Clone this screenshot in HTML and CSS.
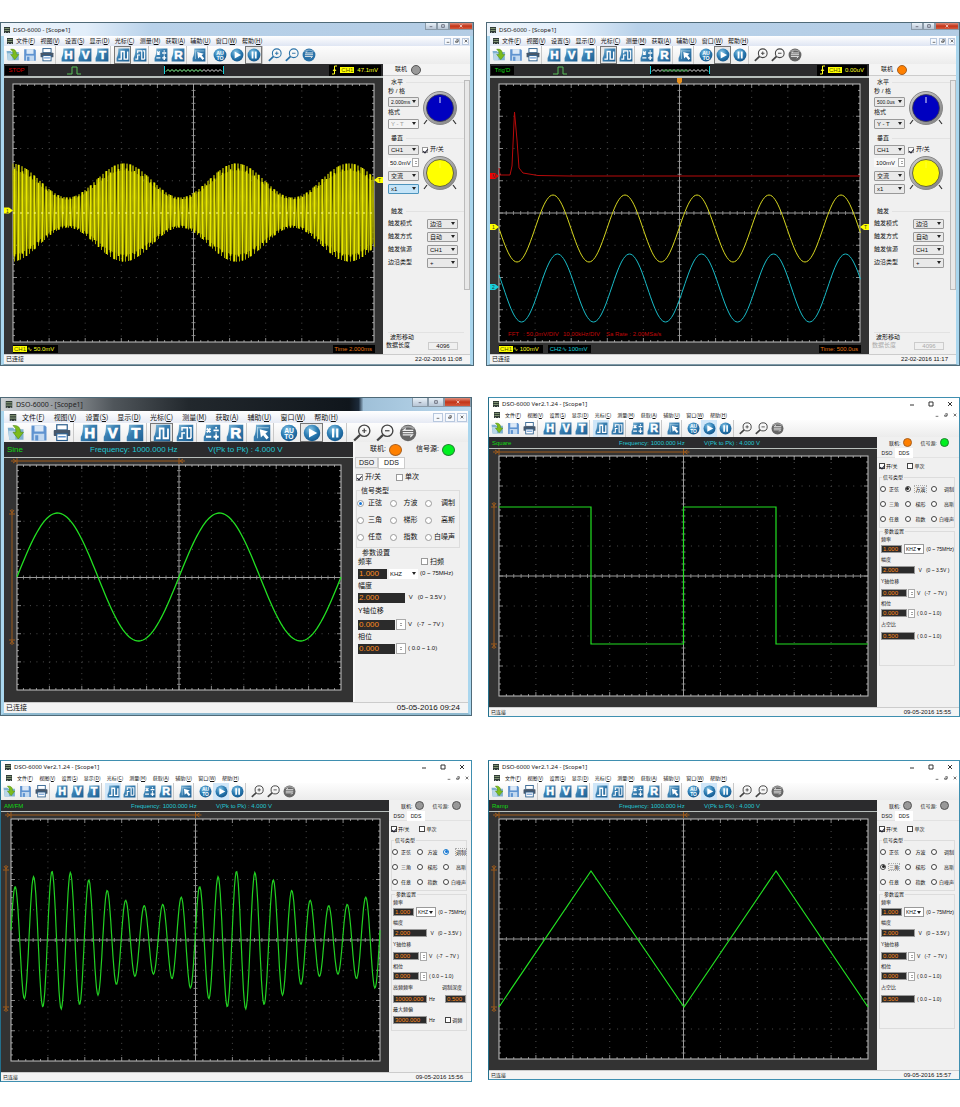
FILE: index.html
```
<!DOCTYPE html>
<html lang="zh-CN">
<head>
<meta charset="utf-8">
<meta name="viewport" content="width=device-width, initial-scale=1">
<title>DSO-6000</title>
<link rel="stylesheet" href="styles.css">
</head>
<body>
<svg class="sprite" aria-hidden="true">
  <defs>
    <linearGradient id="tile" x1="0" y1="0" x2="1" y2="1">
      <stop offset="0" stop-color="#8cc0dc"/><stop offset=".4" stop-color="#3a80b2"/><stop offset="1" stop-color="#1d5f93"/>
    </linearGradient>
    <radialGradient id="ball" cx=".4" cy=".3" r=".8">
      <stop offset="0" stop-color="#8ac6e6"/><stop offset=".5" stop-color="#2c7db4"/><stop offset="1" stop-color="#0f4f84"/>
    </radialGradient>
    <linearGradient id="metal" x1="0" y1="0" x2="1" y2="1">
      <stop offset="0" stop-color="#cfcfcf"/><stop offset="1" stop-color="#7e7e7e"/>
    </linearGradient>
    <symbol id="i-tile" viewBox="0 0 24 24"><path d="M4 1H23V23H1V17Q4 13 4 1Z" fill="url(#tile)"/></symbol>
    <symbol id="i-open" viewBox="0 0 24 24">
      <path d="M1 5H8L10 7H22V21H3Z" fill="#7fb0cf"/><path d="M2 9H11V21H3Z" fill="#b9d6e8"/>
      <path d="M8 2Q18 1 18 11H22L15 20L8 11H12Q13 6 8 2Z" fill="#7dbb1c" stroke="#4b8a12" stroke-width=".8"/>
    </symbol>
    <symbol id="i-save" viewBox="0 0 24 24">
      <path d="M2 2H20L22 4V22H2Z" fill="#5f93d0"/><rect x="6" y="2" width="12" height="8" fill="#dce9f7"/><rect x="5" y="13" width="14" height="9" fill="#c3d9f0"/><rect x="7" y="15" width="4" height="7" fill="#5f93d0"/>
    </symbol>
    <symbol id="i-print" viewBox="0 0 24 24">
      <rect x="5" y="1" width="14" height="7" fill="#fff" stroke="#2c5f8e" stroke-width="1.6"/>
      <rect x="1" y="8" width="22" height="8" rx="1" fill="#47576a"/><rect x="5" y="13" width="14" height="9" fill="#fff" stroke="#2c5f8e" stroke-width="1.6"/><path d="M7 17H17" stroke="#5f93d0" stroke-width="2"/>
    </symbol>
    <symbol id="i-H" viewBox="0 0 24 24"><use href="#i-tile"/><text class="glyph" x="13" y="19">H</text></symbol>
    <symbol id="i-V" viewBox="0 0 24 24"><use href="#i-tile"/><text class="glyph" x="13" y="19">V</text></symbol>
    <symbol id="i-T" viewBox="0 0 24 24"><use href="#i-tile"/><text class="glyph" x="13" y="19">T</text></symbol>
    <symbol id="i-R" viewBox="0 0 24 24"><use href="#i-tile"/><text class="glyph" x="13" y="19">R</text></symbol>
    <symbol id="i-pulse" viewBox="0 0 24 24"><use href="#i-tile"/><path d="M4 19H9V6H14V19H20V6" fill="none" stroke="#fff" stroke-width="2.4"/></symbol>
    <symbol id="i-pulses" viewBox="0 0 24 24"><use href="#i-tile"/><path d="M4 19H8V12H12M8 9V5H15V19H20M17 5H20V19" fill="none" stroke="#fff" stroke-width="2"/></symbol>
    <symbol id="i-math" viewBox="0 0 24 24"><use href="#i-tile"/><path d="M5 6L10 11M10 6L5 11M14 8.5H21M4 17H11M14 17H21M17.500 13.500V20.500" stroke="#fff" stroke-width="2.400"/><circle cx="17.500" cy="5" r="1.300" fill="#fff"/><circle cx="17.500" cy="12" r="1.100" fill="#fff"/></symbol>
    <symbol id="i-cursor" viewBox="0 0 24 24"><use href="#i-tile"/><path d="M6 4V19M6 5H21" stroke="#bfe0f0" stroke-width="1"/><path d="M9 7L20 10L16.500 12.500L21 18L18 20.500L13.500 15L10.500 18Z" fill="#fff"/></symbol>
    <symbol id="i-auto" viewBox="0 0 24 24"><circle cx="12" cy="12" r="11" fill="url(#ball)"/><text class="mini" x="12" y="11.500">AU</text><text class="mini" x="12" y="20">TO</text></symbol>
    <symbol id="i-play" viewBox="0 0 24 24"><circle cx="12" cy="12" r="11" fill="url(#ball)"/><path d="M8 6L19 12L8 18Z" fill="#fff"/></symbol>
    <symbol id="i-pause" viewBox="0 0 24 24"><circle cx="12" cy="12" r="11" fill="url(#ball)"/><path d="M9.500 6V18M15 6V18" stroke="#fff" stroke-width="3"/></symbol>
    <symbol id="i-zin" viewBox="0 0 24 24"><circle cx="15" cy="9" r="7.500" fill="none" stroke="currentColor" stroke-width="1.800"/><path d="M9.500 14.500L1.500 22" stroke="currentColor" stroke-width="3"/><path d="M12 9H18M15 6V12" stroke="currentColor" stroke-width="1.600"/></symbol>
    <symbol id="i-zout" viewBox="0 0 24 24"><circle cx="15" cy="9" r="7.500" fill="none" stroke="currentColor" stroke-width="1.800"/><path d="M9.500 14.500L1.500 22" stroke="currentColor" stroke-width="3"/><path d="M12 9H18" stroke="currentColor" stroke-width="1.600"/></symbol>
    <symbol id="i-swap" viewBox="0 0 24 24"><circle cx="12" cy="12" r="11" fill="currentColor"/><path d="M4 6Q12 1 20 6" stroke="#fff" stroke-opacity=".4" stroke-width="2" fill="none"/><path d="M19 8.500H6L9 6M5 14.500H18L15 17.500M5 11.500H19" stroke="#eee" stroke-width="1.500" fill="none"/></symbol>
    <symbol id="i-app" viewBox="0 0 12 12"><rect width="12" height="12" fill="#2f3b36"/><path d="M1 3H11M1 7H11" stroke="#9fb58a" stroke-width="1.500"/><path d="M3 12V10M9 12V10" stroke="#eee" stroke-width="1"/></symbol>
  </defs>
</svg>
<main class="gallery" id="gallery"></main>
<script src="app.js"></script>
</body>
</html>
```

FILE: styles.css
```
* { box-sizing: border-box; }
body { margin: 0; background: #fff; color: #111; font-family: "Liberation Sans", "Noto Sans CJK SC", sans-serif; }
.sprite { position: absolute; width: 0; height: 0; }
.glyph { font: 900 20px "Liberation Sans", sans-serif; fill: #fff; stroke: #fff; stroke-width: 1; text-anchor: middle; }
.mini { font: 700 9px "Liberation Sans", sans-serif; fill: #fff; text-anchor: middle; }
button, input, select { font: inherit; color: inherit; margin: 0; padding: 0; border: 0; background: none; border-radius: 0; }
fieldset { margin: 0; padding: 0; border: 0; min-width: 0; }

.gallery { padding: 22px 0 26px; }
.pair { display: grid; grid-template-columns: minmax(0, 1fr) minmax(0, 1fr); gap: 16px; align-items: start; margin-bottom: 43px; }
.pair.dso { gap: 12px; margin-bottom: 31px; }
.pair:last-child { margin-bottom: 0; }

/* window frames */
.win { --fs: 5px; --ui: 6px; --slot: 16px; --icon: 14px; --title: 12px; --menu: 10px; --tools: 17px; --info: 11px; --side: 82px; --status: 9px;
  font-size: var(--fs); line-height: 1.2; display: flex; flex-direction: column; border: 1px solid #3f8fb0; border-left-color: #24708c; background: #fff; white-space: nowrap; }
.win.scope7 { --fs: 6px; --slot: 17px; --icon: 15px; --title: 14px; --tools: 18px; --info: 12px; --side: 87px; --status: 10px;
  border: 0 solid #b9d9ee; border-width: 0 4px 2px; border-color: #b9d9ee #a9d6ee #7f9aa8; outline: 1px solid #4f6a78; outline-offset: -1px; }
.win.sine { --fs: 7px; --ui: 8px; --slot: 23px; --icon: 19px; --title: 14px; --menu: 12px; --tools: 19px; --info: 15px; --side: 115px; --status: 11px;
  border-width: 0 4px 3px; border-color: #b5d9ee #a9d6ee #8fb9cf; outline: 1px solid #4f6a78; outline-offset: -1px; }

.titlebar { height: var(--title); display: flex; align-items: center; gap: 3px; padding-left: 4px; font: var(--ui)/1 "Noto Sans", "Liberation Sans", sans-serif; color: #222; }
.scope7 .titlebar { margin: 0 -4px; padding-left: 4px; background: linear-gradient(90deg, #edf4fb 0, #e2eefa 18%, #b9d2ea 32%, #b3cce4 100%); border-top: 1px solid #34474f; }
.sine .titlebar { margin: 0 -4px; padding-left: 5px; font-size: 7px; background: linear-gradient(90deg, #cfd3d6 0, #8d9296 14%, #50565b 24%, #22282d 40%, #10161c 74%, #1c2a3a 76%, #9fc0d8 77%, #bcd9ee 100%); border-top: 1px solid #34474f; }
.appicon { width: 6px; height: 6px; }
.sine .appicon { width: 8px; height: 7px; }
.titlebar h2 { margin: 0 auto 0 0; font: inherit; }
.caption { display: flex; align-self: stretch; align-items: center; }
.caption button { width: 19px; height: 8px; display: grid; place-items: center; color: #333; }
.caption svg { width: 6px; height: 6px; fill: none; stroke: currentColor; }
.scope7 .caption, .sine .caption { align-items: flex-start; }
.scope7 .caption button, .sine .caption button { width: 12px; height: 7px; border: 1px solid #8a9aa8; border-top: 0; background: linear-gradient(#e9f1f8, #b8c6d6); color: #445; }
.scope7 .caption button:last-child, .sine .caption button:last-child { width: 24px; margin-right: 1px; background: linear-gradient(#e0907e, #c33518 50%, #d2583c); color: #fff; }
.sine .caption button { width: 16px; height: 9px; }
.sine .caption button:last-child { width: 27px; }
.scope7 .caption svg, .sine .caption svg { width: 4px; height: 4px; }

.menubar { height: var(--menu); display: flex; align-items: center; gap: 6px; padding-left: 5px; background: #fff; font-family: "Noto Sans CJK SC", sans-serif; }
.menubar .appicon { margin-right: -1px; }
.scope7 .menubar { gap: 5px; padding-left: 3px; background: linear-gradient(#fff, #dfe6f3); }
.scope7 .menubar .appicon { margin-right: -2px; }
.sine .menubar { gap: 9px; padding-left: 5px; background: linear-gradient(#fff, #e6eaf4); }
.sine .menubar .appicon { margin-right: -4px; }
.menubar a { color: inherit; text-decoration: none; }
.mdi { margin-left: auto; display: flex; gap: 2px; padding-right: 1px; }
.mdi button { width: 7px; height: 7px; display: grid; place-items: center; color: #333; }
.mdi svg { width: 4px; height: 4px; fill: none; stroke: currentColor; }
.scope7 .mdi button, .sine .mdi button { border: 1px solid #b8c8de; background: #f6f9fd; }
.sine .mdi button { width: 10px; height: 9px; }

.toolbar { height: var(--tools); display: flex; align-items: center; gap: 3px; background: linear-gradient(#fdfdfd, #ececec); color: #444; }
.toolgroup { height: var(--tools); display: flex; align-items: center; border-right: 1px solid #c8c8c8; }
.toolgroup:last-child { border: 0; }
.toolgroup button { width: var(--slot); height: var(--tools); display: flex; align-items: center; justify-content: center; flex: none; }
.toolgroup svg { width: calc(var(--icon) - 1px); height: calc(var(--icon) - 1px); flex: none; }
.toolgroup button.on { background: #cfe6f8; }
.scope7 .toolgroup button.on, .sine .toolgroup button.on { background: #e8e8e8; box-shadow: inset 0 0 0 1px #777; }
.toolbar.blue { color: #2a72a8; }
.toolbar .gray { color: #666; }

/* body: display and side panel */
.content { display: flex; align-items: stretch; }
.display { flex: 1; min-width: 0; background: #333; display: flex; flex-direction: column; }
.info { height: var(--info); display: flex; align-items: center; padding-left: 3px; font-size: var(--ui); line-height: 1; color: #22c8d4; background: #2b2b2d; }
.info .wave { width: 127px; color: #12d812; }
.info .freq { width: 85px; }
.sine .info .wave { width: 83px; }
.sine .info .freq { width: 118px; }
.rule { height: 1px; background: #b9c0bd; }
.scope7 .rule { height: 2px; }
.plot { display: block; width: 100%; height: auto; }
.plot text { font-family: "Liberation Sans", sans-serif; }
.scope7 .info { padding: 0 2px 0 1px; }
.state { width: 23px; height: 9px; line-height: 9px; background: #000; color: #d80000; text-align: center; }
.state.ok { color: #12d812; }
.info svg { display: block; height: 10px; }
.pulse { width: 16px; margin-left: 38px; }
.preview { width: 60px; margin-left: 82px; }
.trig { margin-left: auto; height: 11px; display: flex; align-items: center; gap: 3px; padding: 0 3px; background: #000; color: #ffff20; }
.trig svg { width: 5px; }
.badge { background: #ffff00; color: #555500; padding: 0 1px; }
.channels { height: 10px; display: flex; align-items: center; gap: 5px; padding: 0 8px 1px 9px; line-height: 8px; }
.channels span { background: #000; color: #ffff20; padding-right: 4px; }
.channels .two { color: #19d0dc; padding-left: 2px; }
.channels .time { margin-left: auto; color: #e07414; padding: 0 3px 0 1px; }
.channels b { font-weight: 400; background: #ffff00; color: #555500; padding: 0 1px; }

.side { width: var(--side); flex: none; background: #f0f0f0; display: flex; flex-direction: column; }
.links { height: var(--info); display: flex; align-items: center; gap: 3px; padding-left: 12px; }
.links .lamp + span { margin-left: 5px; }
.lamp { width: 9px; height: 9px; border-radius: 50%; border: 1px solid #555; background: #999; }
.lamp.orange { background: #ff8000; border-color: #a86020; }
.lamp.green { background: #00f020; border-color: #208030; }
.scope7 .links { border-bottom: 1px solid #ccc; background: #f4f4f4; gap: 4px; }
.scope7 .lamp { width: 10px; height: 10px; }
.sine .links { padding-left: 15px; }
.sine .lamp { width: 13px; height: 12px; }
.sine .links .lamp + span { margin-left: 11px; }

/* function generator panel */
.tabs { height: 10px; display: flex; align-items: stretch; padding-left: 2px; border-bottom: 1px solid #e2e2e2; }
.tabs button { width: 16px; line-height: 8px; }
.tabs button.sel { width: 18px; background: #fff; margin-bottom: -1px; }
.switches { height: 16px; display: flex; align-items: center; gap: 10px; padding-left: 2px; }
.switches label, .sweep { display: flex; align-items: center; gap: 1px; }
input[type=checkbox], input[type=radio] { appearance: none; width: 6px; height: 6px; border: 1px solid #444; background: #fff; flex: none; display: grid; place-items: center; }
input[type=radio] { border-radius: 50%; }
input[type=radio]:checked::before { content: ""; width: 3px; height: 3px; border-radius: 50%; background: #222; }
input[type=radio].blue { border-color: #1878c8; }
input[type=radio].blue:checked::before { background: #1878d8; }
input[type=checkbox]:checked::before { content: ""; width: 2px; height: 4px; border: solid #223; border-width: 0 1px 1px 0; transform: rotate(40deg); }
.group { margin: 0 4px 0 2px; border: 1px solid #dcdcdc; }
.group legend { padding: 0 1px; margin-left: 2px; line-height: 7px; }
.types { display: grid; grid-template-columns: 19px 21px 23px; justify-content: space-between; padding-bottom: 1px; }
.types label { height: 15px; display: flex; align-items: center; justify-content: space-between; }
.types label.focus span { outline: 1px dotted #aaa; }
.params { padding: 0 0 4px 1px; }
.params.tail { padding-bottom: 23px; }
.lab { height: 9px; line-height: 9px; display: flex; justify-content: space-between; padding-right: 4px; }
.lab.short { height: 8px; line-height: 8px; }
.lab.tall { height: 11px; line-height: 11px; }
.row { height: 12px; display: flex; align-items: center; gap: 2px; }
.row .unit { font-size: 5px; }
.row .gap { width: 5px; margin-left: 1px; }
.lcd { width: 34px; height: 8px; background: #2b2b2b; color: #ff8c1c; border: 1px solid #999; font-family: "Liberation Sans", sans-serif; font-size: 6px; line-height: 6px; padding-left: 1px; }
.lcd.s { width: 21px; }
.lcd.m { width: 26px; }
.spin { width: 7px; height: 9px; margin-left: -1px; border: 1px solid #aaa; background: #fff; display: flex; flex-direction: column; align-items: center; justify-content: space-evenly; }
.spin::before, .spin::after { content: ""; border: 1px solid transparent; border-bottom-color: #444; }
.spin::after { border-color: #444 transparent transparent; }
select { appearance: none; height: 10px; border: 1px solid #999; padding-left: 1px; line-height: 8px;
  background: #fff url("data:image/svg+xml,%3Csvg xmlns='http://www.w3.org/2000/svg' width='4' height='3'%3E%3Cpath d='M0 0H4L2 3Z' fill='%23222'/%3E%3C/svg%3E") no-repeat right 2px center; }
.row select { width: 22px; }

.sine .side { border-left: 2px solid #f8f8f8; }
.sine .tabs { height: 12px; padding-left: 0; }
.sine .tabs button { width: 23px; line-height: 10px; border: 1px solid #ccc; }
.sine .tabs button.sel { width: 27px; }
.sine .switches { height: 17px; gap: 15px; padding-left: 1px; }
.sine .switches label, .sine .sweep { gap: 2px; }
.sine input[type=checkbox], .sine input[type=radio] { width: 7px; height: 7px; border-color: #999; }
.sine .group { margin: 0 8px 0 1px; }
.sine .group legend { line-height: 9px; margin-left: 3px; }
.sine .types { grid-template-columns: 25px 28px 30px; padding-right: 4px; }
.sine .types label { height: 17px; }
.sine .params { padding: 0 0 44px 2px; border: 0; }
.sine .lab, .sine .lab.short { height: 9px; line-height: 9px; padding-right: 16px; }
.sine .lab.tall { height: 12px; line-height: 12px; }
.sine .row { height: 15px; }
.sine .row .unit { font-size: 6px; }
.sine .lcd { width: 47px; height: 10px; border: 0; font-size: 8px; line-height: 10px; }
.sine .lcd.s { width: 29px; }
.sine .lcd.m { width: 37px; }
.sine .spin { width: 10px; height: 11px; }
.sine .row select { width: 29px; border: 0; font-size: 6px; }

/* oscilloscope panel */
.pane { flex: 1; display: flex; }
.controls { flex: 1; min-width: 0; display: flex; flex-direction: column; padding: 1px 0 4px 5px; }
.scroll { width: 6px; height: 210px; margin-top: 4px; border: 1px solid #bbb; background: #e8e8e8; }
.head { height: 10px; line-height: 10px; padding: 0 0 0 3px; display: flex; align-items: center; gap: 3px; }
.head::after { content: ""; flex: 1; height: 1px; background: #e2e2e2; }
.vert { margin-top: 3px; }
.trigger { margin-top: 11px; }
.duo { display: flex; gap: 3px; }
.duo > div { width: 31px; }
.duo > .dial { width: 38px; }
.cell { height: 13px; display: flex; align-items: center; justify-content: space-between; }
.controls select { width: 31px; padding-left: 2px; border-radius: 1px; background-color: #e9e9e9; }
.controls select.sec { font-size: 5px; }
.controls select:disabled { opacity: 1; color: #999; background-color: #f4f4f4; }
.controls select.hot { background-color: #c4e4f8; border-color: #4d94bd; }
.controls .volts { width: 24px; height: 9px; padding-left: 2px; background: #f8f8f8; }
.horiz .lab { padding: 0; }
.knob { display: block; width: 36px; height: 36px; }
.horiz .dial { padding-top: 4px; }
.onoff { height: 13px; display: flex; align-items: center; gap: 2px; }
.onoff input { border-color: #999; }
.trigger .head { margin-bottom: 1px; }
.trigger .cell { padding-right: 6px; }
.memory { margin-top: auto; border-top: 1px solid #e2e2e2; padding-right: 6px; }
.memory .lab { padding-left: 2px; }
.memory .cell { height: 9px; margin-left: -2px; }
.memory .off { color: #aaa; }
.memory input { width: 30px; height: 8px; border: 1px solid #ccc; text-align: center; }

.status { height: var(--status); line-height: calc(var(--status) - 1px); display: flex; justify-content: space-between; padding: 0 8px 0 2px; background: #f4f4f4; border-top: 1px solid #ccc; }
.status time { font-size: var(--ui); }
.sine .status time { font-size: 8px; }
```

FILE: app.js
```
const NS = 'fill="none" stroke-width="1"';
const range = n => Array.from({ length: n }, (_, i) => i);
const icon = (id, cls = '') => `<svg class="${cls}" viewBox="0 0 24 24" aria-hidden="true"><use href="#i-${id}"/></svg>`;
let uid = 0;

const trace = (x0, x1, step, f) =>
  'M' + range(Math.round((x1 - x0) / step) + 1).map(i => {
    const x = x0 + i * step;
    return x.toFixed(1) + ' ' + f(x, i).toFixed(1);
  }).join('L');

/* graticule: 10 x 8 divisions, five ticks each */
function grid({ x, y, w, h }) {
  const cx = x + w / 2, cy = y + h / 2, dx = w / 10, dy = h / 8;
  let dots = '', ticks = '', axis = '';
  for (let i = 1; i < 10; i++) if (i !== 5) dots += `<path d="M${x + i * dx} ${y}V${y + h}" stroke-dasharray="1 ${dy / 5 - 1}"/>`;
  for (let i = 1; i < 8; i++) if (i !== 4) dots += `<path d="M${x} ${y + i * dy}H${x + w}" stroke-dasharray="1 ${dx / 5 - 1}"/>`;
  for (let i = 1; i < 50; i++) {
    const t = x + i * w / 50;
    ticks += `M${t} ${y}v${i % 5 ? 2 : 4}M${t} ${y + h}v-${i % 5 ? 2 : 4}`;
    axis += `M${t} ${cy - 2}v4`;
  }
  for (let i = 1; i < 40; i++) {
    const t = y + i * h / 40;
    ticks += `M${x} ${t}h${i % 5 ? 2 : 4}M${x + w} ${t}h-${i % 5 ? 2 : 4}`;
    axis += `M${cx - 2} ${t}h4`;
  }
  return `<rect x="${x}" y="${y}" width="${w}" height="${h}" fill="#000"/>
    <g stroke="#4c4c4c" ${NS}>${dots}</g>
    <path d="${ticks}" stroke="#888" ${NS}/>
    <path d="${axis}" stroke="#7a7a7a" ${NS}/>
    <path d="M${cx} ${y}V${y + h}M${x} ${cy}H${x + w}" stroke="#999" ${NS}/>
    <rect x="${x}" y="${y}" width="${w}" height="${h}" stroke="#c4c4c4" ${NS}/>`;
}

/* orange measuring arrows above and left of the graticule */
function rulers({ x, y, w }, top, bottom) {
  const r = x + w / 2, ty = y - 4, lx = x - 5;
  return `<path stroke="#a05c1c" ${NS} d="M${x - 6} ${ty}H${r + 6}M${x - 4} ${ty - 2}l3 2l-3 2M${x} ${ty - 3}v6M${r} ${ty - 3}v6M${r + 4} ${ty - 2}l-3 2l3 2
    M${lx} ${top - 5}V${bottom + 5}M${lx - 3} ${top}h6M${lx - 2} ${top - 4}l2 3l2 -3M${lx - 3} ${bottom}h6M${lx - 2} ${bottom + 4}l2 -3l2 3"/>`;
}

const line = (d, color, width = 1) => `<path d="${d}" fill="none" stroke="${color}" stroke-width="${width}"/>`;
const flag = (x, y, t, c, dir) =>
  `<path d="${dir === 'r' ? `M${x} ${y - 3}h5l4 3l-4 3h-5z` : `M${x + 9} ${y - 3}h-5l-4 3l4 3h5z`}" fill="${c}"/><text x="${x + (dir === 'r' ? 2 : 4)}" y="${y + 2}" font-size="5" fill="#333">${t}</text>`;
const plot = (w, h, body, label) => `<svg class="plot" viewBox="0 0 ${w} ${h}" role="img" aria-label="${label}">${body}</svg>`;

const big = { x: 9, y: 6, w: 361, h: 258 };
const mid = { x: 10, y: 7, w: 369, h: 240 };
const sineBox = { x: 13, y: 7, w: 324, h: 225 };
const TAU = 2 * Math.PI;

function plotBurst() {
  const env = x => 32 + 17 * Math.cos(TAU * (x - 120) / 112.5);
  const comb = (step, k) => trace(9, 370, step, (x, i) => 134.5 + (i % 2 ? 1 : -1) * k * env(x));
  const bars = range(90).map(i => {
    const x = 10.5 + i * 4, e = env(x) * (i % 2 ? 1 : .9);
    return `M${x} ${(134.5 - e).toFixed(1)}V${(134.5 + e).toFixed(1)}`;
  }).join('');
  return plot(379, 266, grid(big) + line(comb(.9, .86), '#858500') + line(comb(1.5, 1), '#a8a800') + line(bars, '#e8e800', 1.6) +
    `<path d="M9 135H370" stroke="#ffff80" stroke-dasharray="2 5"/>` + flag(0, 132.5, '1', '#ff0', 'r') + flag(370, 102, 'T', '#ff0', 'l'), 'AM');
}
function plotDual() {
  const y = trace(9, 370, 1.5, x => 150.5 - 33.5 * Math.cos(TAU * (x - 63) / 72));
  const c = trace(9, 370, 1.5, x => 210 - 34 * Math.cos(TAU * (x - 67.5) / 72));
  return plot(379, 266, grid(big) +
    line('M9 90L10 97H20L22 88L24.500 34L27 62L29 90L33 95L48 97.500L80 98H370', '#b80a0a') + line(y, '#d8d820') + line(c, '#19bcc8') +
    `<path d="M187 0h5v4l-2.500 2.500l-2.500 -2.500z" fill="#e8901c"/><g fill="#c00808" font-size="6"><text x="18" y="258">FFT</text><text x="33" y="258">: 50.0mV/DIV</text><text x="73" y="258">10.00kHz/DIV</text><text x="116" y="258">Sa Rate : 2.00MSa/s</text></g>` +
    flag(0, 98, 'M', '#f00000', 'r') + flag(0, 149, '1', '#ff0', 'r') + flag(0, 209, '2', '#19d0dc', 'r') + flag(370, 149, 'T', '#ff0', 'l'), 'CH1 CH2 FFT');
}
const plotSine = () => plot(349, 244, grid(sineBox) + rulers(sineBox, 56, 182) +
  line(trace(13, 337, 2, x => 119 - 64 * Math.sin(TAU * (x - 13) / 162)), '#22e022', 1.3), 'Sine');
const plotSquare = () => plot(388, 258, grid(mid) + rulers(mid, 58, 195) +
  line('M10 58H102V195H194.500V58H287V195H379', '#22e022', 1.2), 'Square');
const plotMod = () => plot(388, 260, grid({ ...mid, h: 242 }) + rulers(mid, 58, 195) +
  line(trace(10, 379, .75, x => 128 - (51.5 + 17.5 * Math.cos(TAU * (x - 57) / 184.5)) * Math.cos(TAU * (x - 32.500) / 18.45)), '#22d022', 1.2), 'AM/FM');
const plotRamp = () => plot(388, 258, grid(mid) + rulers(mid, 58, 195) +
  line('M10 195L102 59L195 195L287 59L379 195', '#22e022', 1.2), 'Ramp');

const MENUS = ['文件(F)', '视图(V)', '设置(S)', '显示(D)', '光标(C)', '测量(M)', '获取(A)', '辅助(U)', '窗口(W)', '帮助(H)'];
const TOOLS = [['open', 'save', 'print'], ['H', 'V', 'T'], ['pulse', 'pulses'], ['math', 'R'], ['cursor'], ['auto', 'play', 'pause'], ['zin', 'zout', 'swap']];
const GLYPHS = [['最小化', 'M1 4H5'], ['最大化', 'M1 1H5V5H1Z'], ['关闭', 'M1 1L5 5M5 1L1 5']];
const MDI = [['最小化', 'M1 5H5'], ['还原', 'M1 3H4V5H1ZM2 1H5V4'], ['关闭', 'M1 1L5 5M5 1L1 5']];
const buttons = list => list.map(([n, d]) => `<button type="button" aria-label="${n}"><svg viewBox="0 0 6 6"><path d="${d}"/></svg></button>`).join('');

function toolbar(active, blue) {
  return `<div class="toolbar${blue ? ' blue' : ''}">` + TOOLS.map(g => '<div class="toolgroup">' + g.map(t => {
    const cls = [t === 'pulse' || t === active ? 'on' : '', t === 'swap' && !blue ? 'gray' : ''].join(' ').trim();
    return `<button type="button" aria-label="${t}" class="${cls}">${icon(t)}</button>`;
  }).join('') + '</div>').join('') + '</div>';
}
function menuText(m) { return `${m.slice(0, 3)}<u>${m[3]}</u>)`; }

function win(o, display, side) {
  return `<section class="win ${o.cls}">
    <header class="titlebar">${icon('app', 'appicon')}<h2>${o.title}</h2><div class="caption">${buttons(GLYPHS)}</div></header>
    <nav class="menubar">${icon('app', 'appicon')}${MENUS.map(m => `<a href="#">${menuText(m)}</a>`).join('')}<div class="mdi">${buttons(MDI)}</div></nav>
    ${toolbar(o.active, o.blue)}
    <div class="content"><div class="display">${display}</div><aside class="side">${side}</aside></div>
    <footer class="status"><span>已连接</span><time>${o.time}</time></footer>
  </section>`;
}

const sel = (v, name, extra = '') => `<select aria-label="${name}" ${extra}><option>${v}</option></select>`;
const knob = color => `<svg class="knob" viewBox="0 0 36 36"><path d="M5 29L2 33M31 29L34 33" stroke="#333" stroke-width="1.200"/><circle cx="18" cy="17" r="16.500" fill="url(#metal)" stroke="#888"/><circle cx="18" cy="17" r="13.500" fill="${color}" stroke="#444" stroke-width=".8"/><path d="M18 6V12" stroke="#fff" stroke-opacity="${color === '#ffff00' ? .2 : .9}"/></svg>`;

function dso(o) {
  const display = `<div class="info"><span class="state${o.ok ? ' ok' : ''}">${o.state}</span>
    <svg class="pulse" viewBox="0 0 16 10"><path d="M1 9H6V2H11V9H15" stroke="#58c058" ${NS}/></svg>
    <svg class="preview" viewBox="0 0 60 10"><rect width="60" height="10" fill="#000"/><path d="${trace(2, 58, 2, (x, i) => i % 2 ? 4.5 : 6.5)}" stroke="#ddd" ${NS}/><path d="${trace(o.ok ? 12 : 2, 38, 2, (x, i) => i % 2 ? 4.5 : 6.5)}" stroke="#20a030" ${NS}/><path d="M.5 1V9M59.500 1V9" stroke="#19d0dc"/></svg>
    <span class="trig"><svg viewBox="0 0 5 10"><path d="M0 9H2.500V1H5M1 6L2.500 4L4 6" stroke="#ffff20" ${NS}/></svg><span class="badge">CH1</span><span>${o.level}</span></span></div>
    <div class="rule"></div>${o.plot}
    <div class="channels"><span><b>CH1</b>∿ ${o.volts}</span>${o.ch2 ? `<span class="two">CH2∿ ${o.ch2}</span>` : ''}<span class="time">${o.baseLabel} ${o.base}</span></div>`;
  const trig = [['触发模式', '边沿'], ['触发方式', '自动'], ['触发信源', 'CH1'], ['边沿类型', '+']];
  const id = 'mem' + ++uid;
  const side = `<div class="links"><span>联机</span><i class="lamp${o.ok ? ' orange' : ''}"></i></div>
    <div class="pane"><div class="controls">
      <div class="horiz"><div class="head">水平</div><div class="duo"><div>
        <div class="lab short">秒 / 格</div><div class="cell">${sel(o.sec, '秒/格', 'class="sec"')}</div>
        <div class="lab">格式</div><div class="cell">${sel('Y - T', '格式', o.ok ? '' : 'disabled')}</div></div>
        <div class="dial">${knob('#0000c0')}</div></div></div>
      <div class="vert"><div class="head">垂直</div><div class="duo"><div>
        <div class="cell">${sel('CH1', '通道')}</div>
        <div class="cell"><input class="volts" aria-label="电压" value="${o.volts}"><span class="spin"></span></div>
        <div class="cell">${sel('交流', '耦合')}</div><div class="cell">${sel('x1', '探头', o.ok ? '' : 'class="hot"')}</div></div>
        <div class="dial"><label class="onoff"><input type="checkbox" checked>开/关</label>${knob('#ffff00')}</div></div></div>
      <div class="trigger"><div class="head">触发</div>${trig.map(([a, b]) => `<label class="cell"><span>${a}</span>${sel(b, a)}</label>`).join('')}</div>
      <div class="memory"><div class="lab short">波形移动</div><div class="cell${o.ok ? ' off' : ''}"><label for="${id}">数据长度</label><input id="${id}" value="4096"${o.ok ? ' disabled' : ''}></div></div>
    </div><div class="scroll"></div></div>`;
  return win({ cls: 'scope7', title: 'DSO-6000 - [Scope1]', ...o }, display, side);
}

const TYPES = ['正弦', '方波', '调制', '三角', '梯形', '高斯', '任意', '指数', '白噪声'];

function dds(o) {
  const display = `<div class="info"><span class="wave">${o.wave}</span><span class="freq">Frequency: 1000.000 Hz</span><span>V(Pk to Pk) : 4.000 V</span></div><div class="rule"></div>${o.plot}`;
  const n = ++uid;
  const lcd = (k, v, cls = '') => `<input class="lcd ${cls}" id="f${n}${k}" value="${v}">`;
  const lab = (k, t, cls = '', more = '') => `<div class="lab ${cls}"><label for="f${n}${k}">${t}</label>${more}</div>`;
  let extra = '';
  if (o.duty) extra = lab('d', '占空比', 'tall') + `<div class="row">${lcd('d', '0.500')}<span class="unit">( 0.0 ~ 1.0)</span></div>`;
  if (o.mod) extra = lab('h', '高频频率', 'tall', `<label for="f${n}g">调制深度</label>`) +
    `<div class="row">${lcd('h', '10000.000')}<span class="unit">Hz</span><span class="gap"></span>${lcd('g', '0.500', 's')}</div>` +
    lab('x', '最大频偏') + `<div class="row">${lcd('x', '3000.000')}<span class="unit">Hz</span><span class="gap"></span><label class="sweep"><input type="checkbox">调频</label></div>`;
  const side = `<div class="links"><span>联机:</span><i class="lamp ${o.on ? 'orange' : ''}"></i><span>信号源:</span><i class="lamp ${o.on ? 'green' : ''}"></i></div>
    <div class="tabs"><button type="button">DSO</button><button type="button" class="sel">DDS</button></div>
    <div class="switches"><label><input type="checkbox" checked>开/关</label><label><input type="checkbox">单次</label></div>
    <fieldset class="group"><legend>信号类型</legend><div class="types">${TYPES.map((t, i) =>
      `<label${i === o.type && i ? ' class="focus"' : ''}><input type="radio" name="t${n}"${i === o.type ? ' checked' : ''}${i === o.type && (i === 2 || i === 0) ? ' class="blue"' : ''}><span>${t}</span></label>`).join('')}</div></fieldset>
    <fieldset class="group params${o.duty ? ' tail' : ''}"><legend>参数设置</legend>
      ${lab('a', '频率', 'short', o.sweep ? '<label class="sweep"><input type="checkbox">扫频</label>' : '')}
      <div class="row">${lcd('a', '1.000', 's')}${sel('KHZ', '单位')}<span class="unit">(0 ~ 75MHz)</span></div>
      ${lab('b', '幅度')}<div class="row">${lcd('b', '2.000')}<span class="unit">&nbsp;V &nbsp;&nbsp;(0 ~ 3.5V )</span></div>
      ${lab('c', 'Y轴位移', 'tall')}<div class="row">${lcd('c', '0.000', 'm')}<span class="spin"></span><span class="unit">V &nbsp;&nbsp;(-7 &nbsp;~ 7V )</span></div>
      ${lab('e', '相位', 'short')}<div class="row">${lcd('e', '0.000', 'm')}<span class="spin"></span><span class="unit">( 0.0 ~ 1.0)</span></div>
      ${extra}</fieldset>`;
  return win({ title: 'DSO-6000 Ver2.1.24 - [Scope1]', active: 'play', ...o }, display, side);
}

document.getElementById('gallery').innerHTML = `
  <div class="pair dso">
    ${dso({ state: 'STOP', level: '47.1mV', volts: '50.0mV', baseLabel: 'Time', base: '2.000ms', sec: '2.000ms', plot: plotBurst(), active: 'pause', blue: true, time: '22-02-2016  11:08' })}
    ${dso({ ok: true, state: "Trig'D", level: '0.00uV', volts: '100mV', ch2: '100mV', baseLabel: 'Time:', base: '500.0us', sec: '500.0us', plot: plotDual(), active: 'play', time: '22-02-2016  11:17' })}
  </div>
  <div class="pair">
    ${dds({ cls: 'sine', title: 'DSO-6000 - [Scope1]', wave: 'Sine', on: true, type: 0, sweep: true, plot: plotSine(), time: '05-05-2016  09:24' })}
    ${dds({ cls: 'square', wave: 'Square', on: true, type: 1, duty: true, plot: plotSquare(), time: '09-05-2016  15:55' })}
  </div>
  <div class="pair">
    ${dds({ cls: 'mod', wave: 'AM/FM', type: 2, mod: true, plot: plotMod(), time: '09-05-2016  15:56' })}
    ${dds({ cls: 'ramp', wave: 'Ramp', type: 3, duty: true, plot: plotRamp(), time: '09-05-2016  15:57' })}
  </div>`;
```
